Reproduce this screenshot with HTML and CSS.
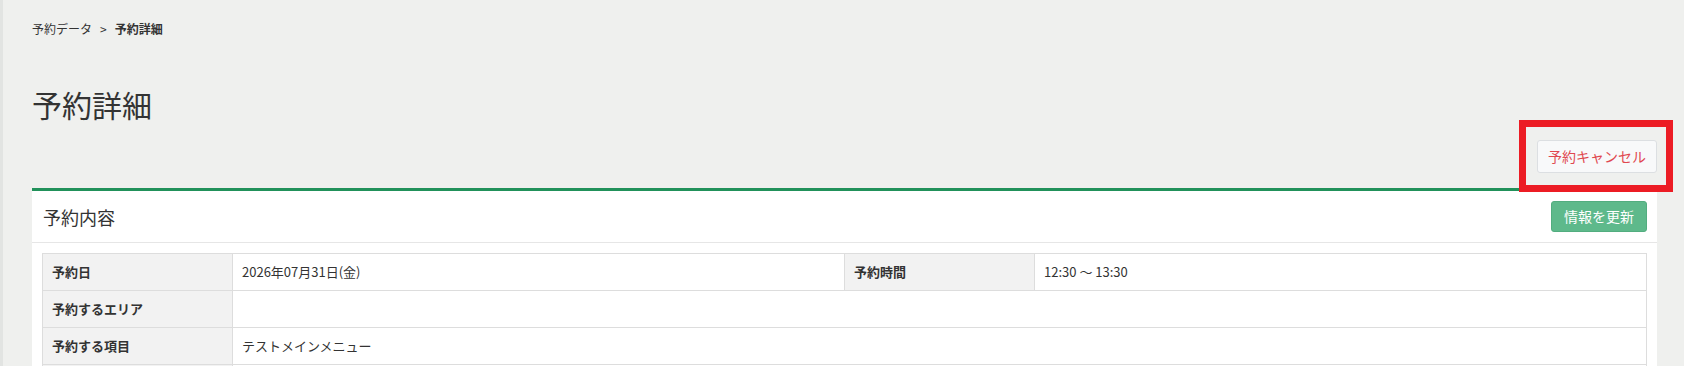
FILE: index.html
```html
<!DOCTYPE html>
<html lang="ja">

<head>
    <meta charset="UTF-8">
    <meta name="viewport" content="width=device-width, initial-scale=1.0">
    <title>予約詳細</title>
    <link rel="stylesheet" href="styles.css">
</head>

<body>
    <div id="wrapper">
        <div class="breadcrumb">
            <span>予約データ</span>
            <span class="sep">&gt;</span>
            <span class="current">予約詳細</span>
        </div>

        <h1 class="pageTitle">予約詳細</h1>

        <div class="actions">
            <button class="btnCancel">予約キャンセル</button>
        </div>

        <div class="card">
            <div class="cardHeader">
                <h2 class="cardTitle">予約内容</h2>
                <button class="btnUpdate">情報を更新</button>
            </div>
            <div class="cardBody">
                <table class="detailTable">
                    <colgroup>
                        <col class="colLabel">
                        <col>
                        <col class="colLabel">
                        <col>
                    </colgroup>
                    <tr>
                        <th>予約日</th>
                        <td>2026年07月31日(金)</td>
                        <th>予約時間</th>
                        <td>12:30 ～ 13:30</td>
                    </tr>
                    <tr>
                        <th>予約するエリア</th>
                        <td colspan="3"></td>
                    </tr>
                    <tr>
                        <th>予約する項目</th>
                        <td colspan="3">テストメインメニュー</td>
                    </tr>
                    <tr>
                        <th></th>
                        <td colspan="3"></td>
                    </tr>
                </table>
            </div>
        </div>
    </div>

    <!-- 注目枠 -->
    <div class="highlight"></div>
</body>

</html>
```

FILE: styles.css
```css
* {
    margin: 0;
    padding: 0;
    box-sizing: border-box;
}

body {
    background-color: #eff0ee;
    border-left: 3px solid #e2e4e2;
    font-family: "Noto Sans CJK JP", sans-serif;
    color: #333333;
    min-height: 366px;
}

#wrapper {
    padding: 0 27px 0 29px;
}

.breadcrumb {
    margin-top: 20px;
    font-size: 12px;
    line-height: 18px;
    display: flex;
    gap: 8px;
}

.breadcrumb .current {
    font-weight: 700;
}

.pageTitle {
    margin-top: 48px;
    font-size: 30px;
    line-height: 36px;
    font-weight: 400;
}

.actions {
    margin-top: 18px;
    display: flex;
    justify-content: flex-end;
}

.btnCancel {
    font-family: inherit;
    font-size: 14px;
    line-height: 19px;
    padding: 6px 10px;
    background-color: #f8f9fa;
    border: 1px solid #dcdfe2;
    border-radius: 3px;
    color: #e0474f;
}

.card {
    margin-top: 15px;
    background-color: #ffffff;
    border-top: 3px solid #21915a;
}

.cardHeader {
    display: flex;
    justify-content: space-between;
    align-items: center;
    padding: 10px 10px 10px 11px;
    border-bottom: 1px solid #e6e6e6;
}

.cardTitle {
    font-size: 18px;
    line-height: 24px;
    font-weight: 400;
}

.btnUpdate {
    font-family: inherit;
    font-size: 14px;
    line-height: 19px;
    padding: 5px 12px;
    background-color: #5eb98b;
    border: 1px solid #52ad7f;
    border-radius: 3px;
    color: #ffffff;
}

.cardBody {
    padding: 10px;
}

.detailTable {
    width: 100%;
    border-collapse: collapse;
    table-layout: fixed;
    font-size: 13px;
}

.colLabel {
    width: 190px;
}

.detailTable th,
.detailTable td {
    border: 1px solid #dddddd;
    padding: 9px 9px;
    line-height: 18px;
    height: 37px;
    text-align: left;
}

.detailTable th {
    background-color: #f2f2f2;
    font-weight: 700;
}

.highlight {
    position: absolute;
    left: 1519px;
    top: 120px;
    width: 154px;
    height: 72px;
    border: 7px solid #ec1c24;
}
```
